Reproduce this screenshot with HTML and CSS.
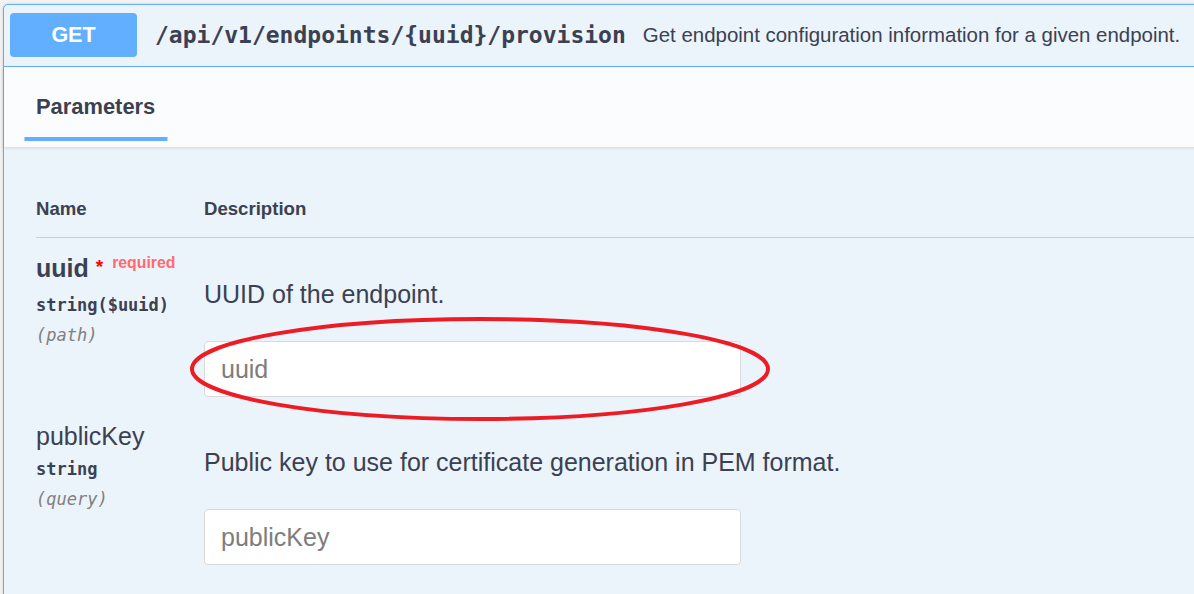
FILE: index.html
```html
<!DOCTYPE html>
<html>
<head>
<meta charset="utf-8">
<link rel="stylesheet" href="styles.css">
</head>
<body>
<div class="page">
  <div class="opblock">
    <div class="summary">
      <span class="method">GET</span>
      <span class="path">/api/v1/endpoints/{uuid}/provision</span>
      <span class="summary-desc">Get endpoint configuration information for a given endpoint.</span>
    </div>
    <div class="tab-header">
      <h4 class="tab-title">Parameters</h4>
    </div>
    <div class="params">
      <div class="params-head">
        <div class="col-name">Name</div>
        <div class="col-desc">Description</div>
      </div>
      <div class="param-row">
        <div class="param-name">
          <div class="pname pname-req">uuid<span class="star">*</span><span class="req">required</span></div>
          <div class="ptype">string($uuid)</div>
          <div class="pin">(path)</div>
        </div>
        <div class="param-desc">
          <p class="desc-text">UUID of the endpoint.</p>
          <input class="pinput" type="text" placeholder="uuid">
        </div>
      </div>
      <div class="param-row">
        <div class="param-name">
          <div class="pname">publicKey</div>
          <div class="ptype">string</div>
          <div class="pin">(query)</div>
        </div>
        <div class="param-desc">
          <p class="desc-text">Public key to use for certificate generation in PEM format.</p>
          <input class="pinput" type="text" placeholder="publicKey">
        </div>
      </div>
    </div>
  </div>
  <svg class="annotation" width="600" height="120" viewBox="0 0 600 120">
    <ellipse cx="300" cy="60" rx="288" ry="50" fill="none" stroke="#ed1c24" stroke-width="4"/>
  </svg>
</div>
</body>
</html>
```

FILE: styles.css
```css
html, body {
  margin: 0;
  padding: 0;
  overflow: hidden;
  background: #f3f3f3;
}
body {
  width: 1194px;
  height: 594px;
  font-family: "Liberation Sans", Arial, sans-serif;
  color: #3b4151;
}
.page {
  position: relative;
  padding: 4px 0 0 3px;
}
.opblock {
  width: 1260px;
  height: 640px;
  border: 1px solid #61affe;
  border-radius: 5px;
  background: #ebf3fb;
  box-shadow: 0 0 3px rgba(0, 0, 0, 0.19);
  box-sizing: border-box;
}
.summary {
  display: flex;
  align-items: center;
  padding: 8px 6px 9px;
  border-bottom: 1px solid #61affe;
}
.method {
  display: flex;
  align-items: center;
  justify-content: center;
  width: 127px;
  height: 44px;
  border-radius: 4px;
  background: #61affe;
  color: #fff;
  font-weight: bold;
  font-size: 21.5px;
}
.path {
  margin-left: 18px;
  font-family: "DejaVu Sans Mono", monospace;
  font-weight: bold;
  font-size: 23px;
  color: #3b4151;
}
.summary-desc {
  margin-left: 17px;
  font-size: 20.45px;
  color: #3b4151;
  white-space: nowrap;
}
.tab-header {
  display: flex;
  align-items: center;
  height: 80px;
  padding: 0 32px;
  background: #fafcfe;
  box-shadow: 0 1px 3px rgba(0, 0, 0, 0.12);
}
.tab-title {
  position: relative;
  margin: 0;
  font-size: 21.9px;
  font-weight: bold;
  line-height: 24px;
}
.tab-title::after {
  content: "";
  position: absolute;
  left: 50%;
  bottom: -22px;
  width: 120%;
  height: 4px;
  background: #61affe;
  transform: translateX(-50%);
}
.params {
  padding: 0 0 0 32px;
}
.params-head {
  display: flex;
  align-items: flex-end;
  height: 91px;
  padding-bottom: 18px;
  line-height: 21px;
  box-sizing: border-box;
  border-bottom: 1px solid #c9d0da;
  font-weight: bold;
  font-size: 18.6px;
}
.col-name {
  width: 168px;
}
.param-row {
  display: flex;
  padding-top: 15px;
}
.param-row + .param-row {
  padding-top: 24px;
}
.param-name {
  width: 168px;
  flex: none;
}
.pname {
  font-size: 25px;
  line-height: 30px;
  white-space: nowrap;
}
.pname-req {
  font-weight: bold;
}
.star {
  position: relative;
  top: -4px;
  margin-left: 7px;
  color: #f00;
  font-size: 19px;
}
.req {
  position: relative;
  top: -9px;
  margin-left: 9px;
  color: #ff6a6f;
  font-size: 15.8px;
  font-weight: bold;
}
.ptype {
  margin-top: 3px;
  font-family: "DejaVu Sans Mono", monospace;
  font-weight: bold;
  font-size: 17px;
  line-height: 30px;
}
.pin {
  font-family: "DejaVu Sans Mono", monospace;
  font-style: italic;
  font-size: 17px;
  line-height: 30px;
  color: #808080;
}
.param-desc {
  flex: 1;
  padding-top: 26px;
}
.desc-text {
  margin: 0;
  font-size: 25px;
  line-height: 30px;
  white-space: nowrap;
}
.pinput {
  display: block;
  margin-top: 32px;
  width: 537px;
  height: 56px;
  box-sizing: border-box;
  padding: 0 16px;
  border: 1px solid #d9d9d9;
  border-radius: 4px;
  background: #fff;
  font-family: "Liberation Sans", Arial, sans-serif;
  font-size: 25px;
  color: #3b4151;
  outline: none;
}
.pinput::placeholder {
  color: #7d7d7d;
}
.annotation {
  position: absolute;
  left: 180px;
  top: 309px;
}
```
